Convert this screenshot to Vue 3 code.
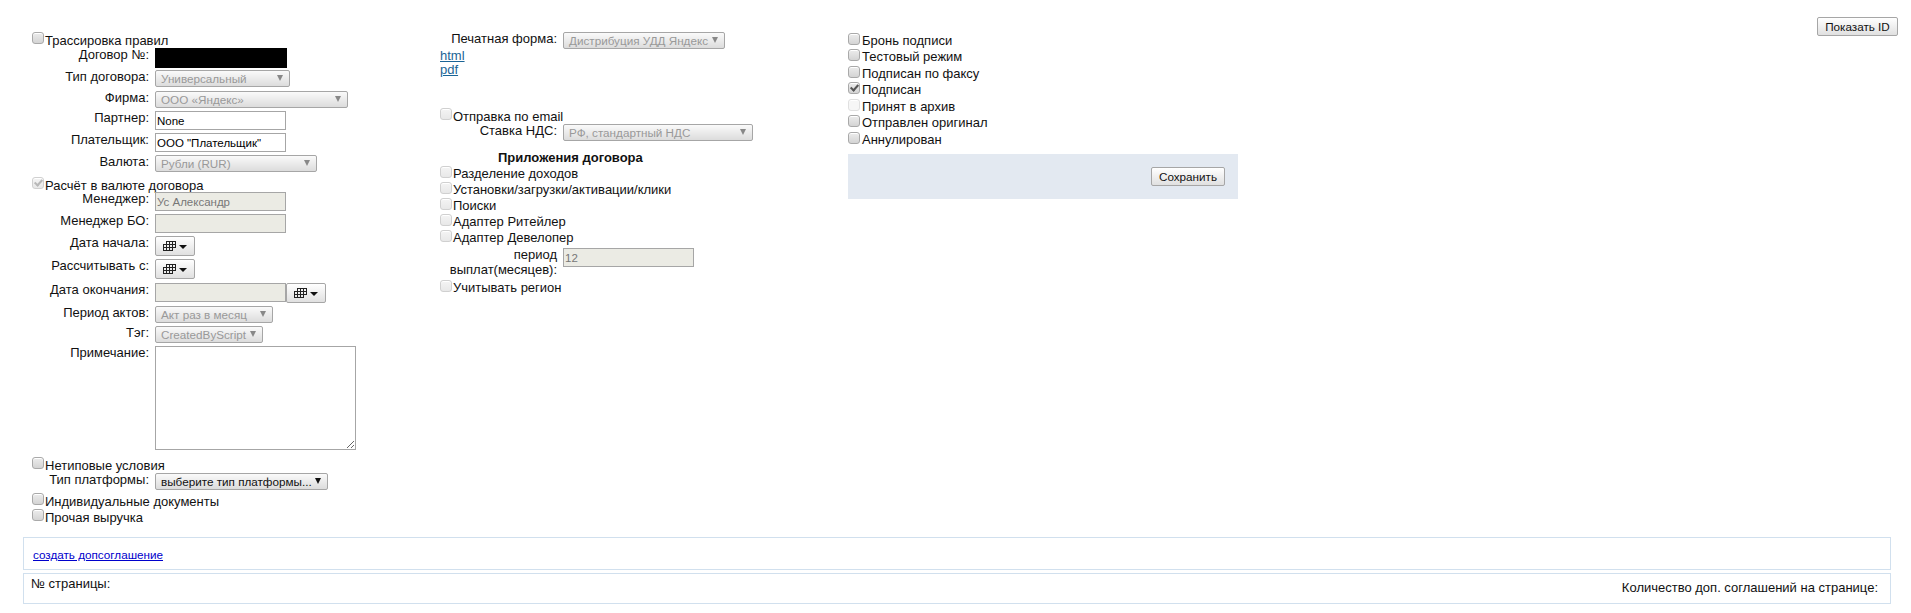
<script setup>
const calPath = 'M3 .5h10M0 3.5h13M0 6.5h13M0 9.5h10M.5 3v7M3.5 0v10M6.5 0v10M9.5 0v10M12.5 0v7'
const appendix = ['Разделение доходов', 'Установки/загрузки/активации/клики', 'Поиски', 'Адаптер Ритейлер', 'Адаптер Девелопер']
const status = [
  { t: 'Бронь подписи' },
  { t: 'Тестовый режим' },
  { t: 'Подписан по факсу' },
  { t: 'Подписан', on: true },
  { t: 'Принят в архив', off: true },
  { t: 'Отправлен оригинал' },
  { t: 'Аннулирован' }
]
</script>

<template>
  <div class="page">
    <button class="btn show-id">Показать ID</button>
    <div class="cols">
      <div class="col col-left">
        <div class="chk h18"><input type="checkbox" class="cb" /><span>Трассировка правил</span></div>
        <div class="row h22"><label>Договор №:</label><div class="redact"></div></div>
        <div class="row h21"><label>Тип договора:</label><div class="sel dis w135">Универсальный</div></div>
        <div class="row h20"><label>Фирма:</label><div class="sel dis w193">ООО «Яндекс»</div></div>
        <div class="row h22"><label>Партнер:</label><input class="inp" value="None" /></div>
        <div class="row h22"><label>Плательщик:</label><input class="inp" value='ООО "Плательщик"' /></div>
        <div class="row h20"><label>Валюта:</label><div class="sel dis w162">Рубли (RUR)</div></div>
        <div class="chk h17"><input type="checkbox" class="cb dim" checked disabled /><span>Расчёт в валюте договора</span></div>
        <div class="row h22"><label>Менеджер:</label><input class="inp ro" value="Ус Александр" disabled /></div>
        <div class="row h22"><label>Менеджер БО:</label><input class="inp ro" disabled /></div>
        <div class="row h23"><label>Дата начала:</label>
          <button class="btn cal"><svg width="13" height="10" viewBox="0 0 13 10"><path :d="calPath" stroke="#222" fill="none"/></svg><i class="caret"></i></button>
        </div>
        <div class="row h24"><label>Рассчитывать с:</label>
          <button class="btn cal"><svg width="13" height="10" viewBox="0 0 13 10"><path :d="calPath" stroke="#222" fill="none"/></svg><i class="caret"></i></button>
        </div>
        <div class="row h23"><label>Дата окончания:</label>
          <input class="inp ro" disabled />
          <button class="btn cal"><svg width="13" height="10" viewBox="0 0 13 10"><path :d="calPath" stroke="#222" fill="none"/></svg><i class="caret"></i></button>
        </div>
        <div class="row h20"><label>Период актов:</label><div class="sel dis w118">Акт раз в месяц</div></div>
        <div class="row h20"><label>Тэг:</label><div class="sel dis w108">CreatedByScript</div></div>
        <div class="row h109"><label>Примечание:</label><textarea class="note"></textarea></div>
        <div class="chk h18"><input type="checkbox" class="cb" /><span>Нетиповые условия</span></div>
        <div class="row h18"><label>Тип платформы:</label><div class="sel w173">выберите тип платформы...</div></div>
        <div class="chk h16"><input type="checkbox" class="cb" /><span>Индивидуальные документы</span></div>
        <div class="chk h16"><input type="checkbox" class="cb" /><span>Прочая выручка</span></div>
      </div>

      <div class="col col-mid">
        <div class="row mrow h16 pf"><label>Печатная форма:</label><div class="sel dis w162">Дистрибуция УДД Яндекс</div></div>
        <a class="doc" href="#">html</a>
        <a class="doc" href="#">pdf</a>
        <div class="chk h18 email m0"><input type="checkbox" class="cb dim" disabled /><span>Отправка по email</span></div>
        <div class="row mrow h26"><label>Ставка НДС:</label><div class="sel dis w190">РФ, стандартный НДС</div></div>
        <div class="sub-title">Приложения договора</div>
        <div v-for="a in appendix" :key="a" class="chk h16 m m0"><input type="checkbox" class="cb dim" disabled /><span>{{ a }}</span></div>
        <div class="row mrow h30 period"><label>период выплат(месяцев):</label><input class="inp ro" value="12" disabled /></div>
        <div class="chk h16 m m0"><input type="checkbox" class="cb dim" disabled /><span>Учитывать регион</span></div>
      </div>

      <div class="col col-right">
        <div v-for="s in status" :key="s.t" class="chk st m0">
          <input type="checkbox" class="cb" :class="{ faint: s.off }" :checked="s.on" :disabled="s.off" /><span>{{ s.t }}</span>
        </div>
        <div class="save"><button class="btn">Сохранить</button></div>
      </div>
    </div>

    <div class="panel p1"><a href="#">создать допсоглашение</a></div>
    <div class="panel p2"><span>№ страницы:</span><span class="per">Количество доп. соглашений на странице:</span></div>
  </div>
</template>

<style>
html, body { margin: 0; background: #fff; }
</style>

<style scoped>
.page { position: relative; width: 1911px; height: 613px; box-sizing: border-box; padding-top: 30px; overflow: hidden; font: 13px/15px "Liberation Sans", Arial, sans-serif; color: #111; }
.cols { display: flex; height: 507px; }
.col-left { width: 440px; flex: none; }
.col-mid { width: 408px; flex: none; }
.col-right { width: 390px; flex: none; padding-top: 0.6px; }
.show-id { position: absolute; top: 17px; left: 1817px; width: 81px; height: 19px; }

.row { display: flex; align-items: flex-start; }
.row label { width: 149px; margin: -1px 6px 0 0; text-align: right; flex: none; }
.mrow label { width: 117px; }
.chk { display: flex; align-items: flex-start; padding-left: 32px; }
.chk span { margin-top: 3px; margin-left: 1px; }
.chk .cb { margin-top: 2px; }
.chk.m0 { padding-left: 0; }
.chk.m span, .chk.st span { margin-top: 2px; }
.chk.st span { margin-left: 2px; }
.st { height: 16.5px; }

.h16 { height: 16px; } .h18 { height: 18px; }
.h20 { height: 20px; } .h21 { height: 21px; } .h22 { height: 22px; } .h23 { height: 23px; }
.h17 { height: 17px; }
.h24 { height: 24px; } .h26 { height: 26px; } .h30 { height: 30px; } .h109 { height: 109px; }

.cb { appearance: none; -webkit-appearance: none; box-sizing: border-box; width: 12px; height: 12px; margin: 0; border: 1px solid #a9a9a9; border-radius: 3px; background: linear-gradient(#ececec, #d4d4d4); box-shadow: inset 0 1px 0 #fff; position: relative; flex: none; }
.cb.dim { border-color: #d0d0d0; background: linear-gradient(#f4f4f4, #e8e8e8); }
.cb.faint { border-color: #e0e0e0; background: #f6f6f6; }
.cb:checked::after { content: ""; position: absolute; left: 3px; top: 0; width: 3px; height: 6px; border: solid #555; border-width: 0 2px 2px 0; transform: rotate(42deg); }
.cb.dim:checked::after { border-color: #b8b8b8; }

.redact { width: 132px; height: 20px; background: #000; }
.inp { box-sizing: border-box; width: 131px; height: 19px; padding: 2px 1px 1px; margin: 0; border: 1px solid #a6a6a6; background: #fff; color: #000; font: 11.5px "Liberation Sans", Arial, sans-serif; outline: none; }
.inp.ro { background: #ebebe4; color: #777; }

.sel { position: relative; box-sizing: border-box; height: 17px; padding: 1px 0 0 5px; border: 1px solid #a6a6a6; border-radius: 2px; background: linear-gradient(#fafafa, #dcdcdc); font-size: 11.7px; line-height: 14px; white-space: nowrap; color: #111; flex: none; }
.sel.dis { color: #999; }
.sel::after { content: ""; position: absolute; right: 6px; top: 4px; border: 3.5px solid transparent; border-top: 6px solid #111; border-bottom: 0; }
.sel.dis::after { border-top-color: #888; }
.w108 { width: 108px; } .w118 { width: 118px; } .w135 { width: 135px; } .w162 { width: 162px; }
.w173 { width: 173px; } .w190 { width: 190px; } .w193 { width: 193px; }

.btn { box-sizing: border-box; padding: 0; border: 1px solid #a6a6a6; border-radius: 2px; background: linear-gradient(#fff, #e0e0e0); color: #111; font: 11.7px "Liberation Sans", Arial, sans-serif; }
.cal { display: flex; align-items: center; justify-content: center; gap: 3px; width: 40px; height: 20px; }
.caret { border: 4px solid transparent; border-top: 4px solid #111; border-bottom: 0; margin-top: 1px; }
.note { box-sizing: border-box; width: 201px; height: 104px; margin: 0; border: 1px solid #a6a6a6; background: #fff; outline: none; }

.doc { display: block; height: 14px; color: #1a6496; }
.pf { margin: 2px 0 0; }
.email { margin-top: 30px; }
.sub-title { font-weight: bold; height: 14px; margin-left: 58px; }
.period { margin-top: 4px; }

.save { box-sizing: border-box; display: flex; justify-content: flex-end; align-items: center; width: 390px; height: 45px; margin-top: 7.9px; padding-right: 13px; background: #e3e9f1; }
.save .btn { width: 74px; height: 19px; }

.panel { position: absolute; left: 23px; width: 1868px; box-sizing: border-box; border: 1px solid #d1e0ee; }
.p1 { top: 537px; height: 33px; padding: 9px 9px 0; font-size: 11.7px; }
.p1 a { color: #00c; }
.p2 { top: 573px; height: 31px; display: flex; justify-content: space-between; padding: 2px 12px 0 7px; }
.per { margin-top: 4px; }
</style>
